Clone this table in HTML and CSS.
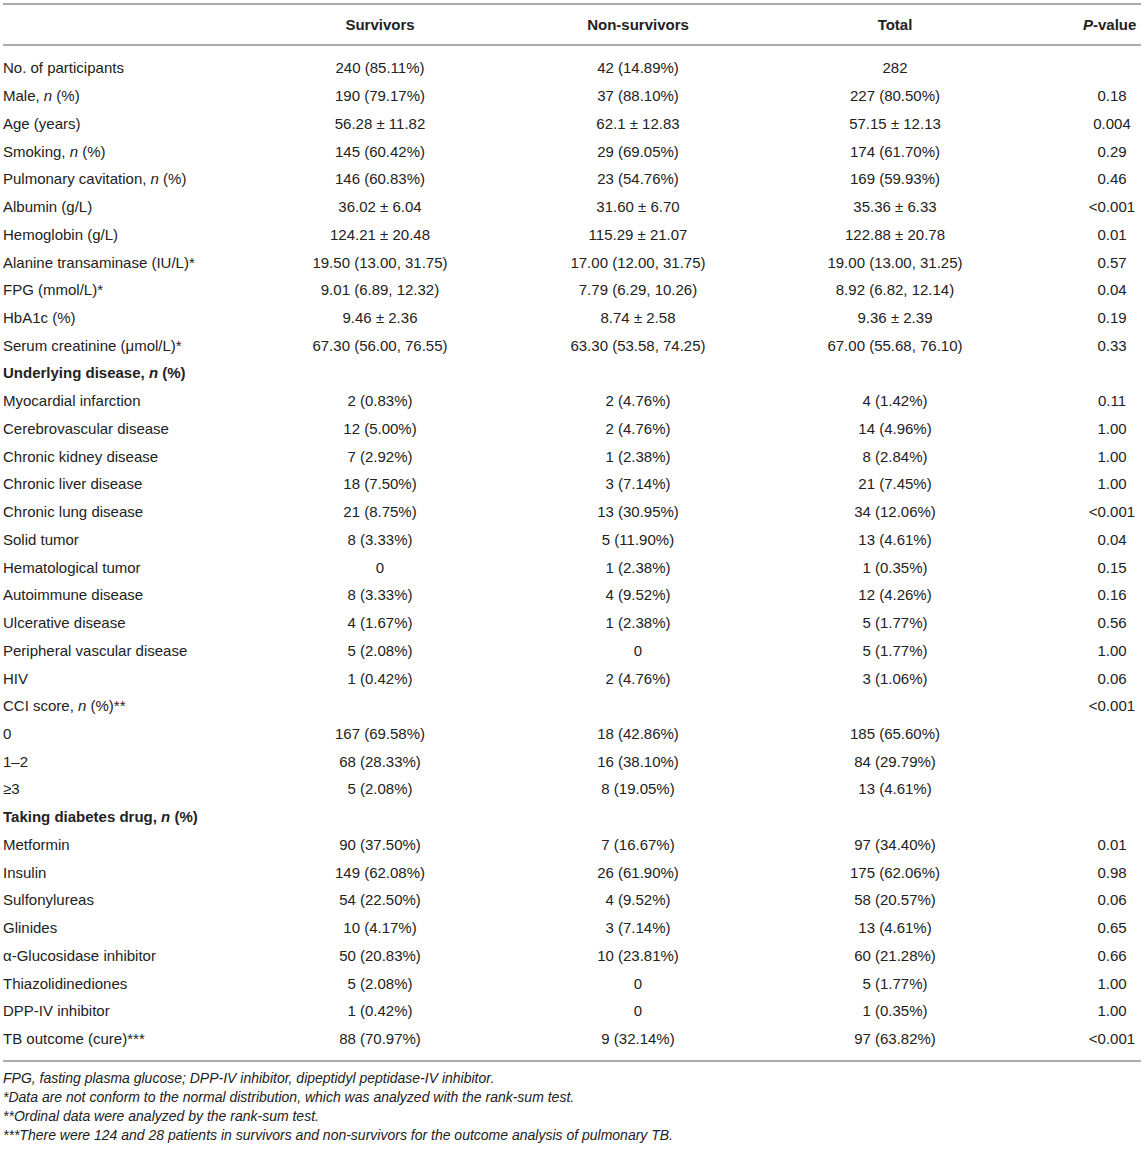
FILE: index.html
```html
<!DOCTYPE html>
<html lang="en">
<head>
  <meta charset="UTF-8" />
  <title>Baseline characteristics</title>
  <link rel="stylesheet" href="styles.css">
</head>
<body>

<div class="wrap">
  <table class="data">
    <colgroup>
      <col class="c-label">
      <col class="c-surv">
      <col class="c-non">
      <col class="c-total">
      <col class="c-p">
    </colgroup>
    <thead>
      <tr>
        <th></th>
        <th>Survivors</th>
        <th>Non-survivors</th>
        <th>Total</th>
        <th class="p-head"><i>P</i>-value</th>
      </tr>
    </thead>
    <tbody>
      <tr class="first"><td>No. of participants</td><td>240 (85.11%)</td><td>42 (14.89%)</td><td>282</td><td></td></tr>
      <tr><td>Male, <i>n</i> (%)</td><td>190 (79.17%)</td><td>37 (88.10%)</td><td>227 (80.50%)</td><td>0.18</td></tr>
      <tr><td>Age (years)</td><td>56.28 ± 11.82</td><td>62.1 ± 12.83</td><td>57.15 ± 12.13</td><td>0.004</td></tr>
      <tr><td>Smoking, <i>n</i> (%)</td><td>145 (60.42%)</td><td>29 (69.05%)</td><td>174 (61.70%)</td><td>0.29</td></tr>
      <tr><td>Pulmonary cavitation, <i>n</i> (%)</td><td>146 (60.83%)</td><td>23 (54.76%)</td><td>169 (59.93%)</td><td>0.46</td></tr>
      <tr><td>Albumin (g/L)</td><td>36.02 ± 6.04</td><td>31.60 ± 6.70</td><td>35.36 ± 6.33</td><td>&lt;0.001</td></tr>
      <tr><td>Hemoglobin (g/L)</td><td>124.21 ± 20.48</td><td>115.29 ± 21.07</td><td>122.88 ± 20.78</td><td>0.01</td></tr>
      <tr><td>Alanine transaminase (IU/L)*</td><td>19.50 (13.00, 31.75)</td><td>17.00 (12.00, 31.75)</td><td>19.00 (13.00, 31.25)</td><td>0.57</td></tr>
      <tr><td>FPG (mmol/L)*</td><td>9.01 (6.89, 12.32)</td><td>7.79 (6.29, 10.26)</td><td>8.92 (6.82, 12.14)</td><td>0.04</td></tr>
      <tr><td>HbA1c (%)</td><td>9.46 ± 2.36</td><td>8.74 ± 2.58</td><td>9.36 ± 2.39</td><td>0.19</td></tr>
      <tr><td>Serum creatinine (μmol/L)*</td><td>67.30 (56.00, 76.55)</td><td>63.30 (53.58, 74.25)</td><td>67.00 (55.68, 76.10)</td><td>0.33</td></tr>
      <tr class="section"><td colspan="5">Underlying disease, <i>n</i> (%)</td></tr>
      <tr><td>Myocardial infarction</td><td>2 (0.83%)</td><td>2 (4.76%)</td><td>4 (1.42%)</td><td>0.11</td></tr>
      <tr><td>Cerebrovascular disease</td><td>12 (5.00%)</td><td>2 (4.76%)</td><td>14 (4.96%)</td><td>1.00</td></tr>
      <tr><td>Chronic kidney disease</td><td>7 (2.92%)</td><td>1 (2.38%)</td><td>8 (2.84%)</td><td>1.00</td></tr>
      <tr><td>Chronic liver disease</td><td>18 (7.50%)</td><td>3 (7.14%)</td><td>21 (7.45%)</td><td>1.00</td></tr>
      <tr><td>Chronic lung disease</td><td>21 (8.75%)</td><td>13 (30.95%)</td><td>34 (12.06%)</td><td>&lt;0.001</td></tr>
      <tr><td>Solid tumor</td><td>8 (3.33%)</td><td>5 (11.90%)</td><td>13 (4.61%)</td><td>0.04</td></tr>
      <tr><td>Hematological tumor</td><td>0</td><td>1 (2.38%)</td><td>1 (0.35%)</td><td>0.15</td></tr>
      <tr><td>Autoimmune disease</td><td>8 (3.33%)</td><td>4 (9.52%)</td><td>12 (4.26%)</td><td>0.16</td></tr>
      <tr><td>Ulcerative disease</td><td>4 (1.67%)</td><td>1 (2.38%)</td><td>5 (1.77%)</td><td>0.56</td></tr>
      <tr><td>Peripheral vascular disease</td><td>5 (2.08%)</td><td>0</td><td>5 (1.77%)</td><td>1.00</td></tr>
      <tr><td>HIV</td><td>1 (0.42%)</td><td>2 (4.76%)</td><td>3 (1.06%)</td><td>0.06</td></tr>
      <tr><td>CCI score, <i>n</i> (%)**</td><td></td><td></td><td></td><td>&lt;0.001</td></tr>
      <tr><td>0</td><td>167 (69.58%)</td><td>18 (42.86%)</td><td>185 (65.60%)</td><td></td></tr>
      <tr><td>1–2</td><td>68 (28.33%)</td><td>16 (38.10%)</td><td>84 (29.79%)</td><td></td></tr>
      <tr><td>≥3</td><td>5 (2.08%)</td><td>8 (19.05%)</td><td>13 (4.61%)</td><td></td></tr>
      <tr class="section"><td colspan="5">Taking diabetes drug, <i>n</i> (%)</td></tr>
      <tr><td>Metformin</td><td>90 (37.50%)</td><td>7 (16.67%)</td><td>97 (34.40%)</td><td>0.01</td></tr>
      <tr><td>Insulin</td><td>149 (62.08%)</td><td>26 (61.90%)</td><td>175 (62.06%)</td><td>0.98</td></tr>
      <tr><td>Sulfonylureas</td><td>54 (22.50%)</td><td>4 (9.52%)</td><td>58 (20.57%)</td><td>0.06</td></tr>
      <tr><td>Glinides</td><td>10 (4.17%)</td><td>3 (7.14%)</td><td>13 (4.61%)</td><td>0.65</td></tr>
      <tr><td>α-Glucosidase inhibitor</td><td>50 (20.83%)</td><td>10 (23.81%)</td><td>60 (21.28%)</td><td>0.66</td></tr>
      <tr><td>Thiazolidinediones</td><td>5 (2.08%)</td><td>0</td><td>5 (1.77%)</td><td>1.00</td></tr>
      <tr><td>DPP-IV inhibitor</td><td>1 (0.42%)</td><td>0</td><td>1 (0.35%)</td><td>1.00</td></tr>
      <tr class="last"><td>TB outcome (cure)***</td><td>88 (70.97%)</td><td>9 (32.14%)</td><td>97 (63.82%)</td><td>&lt;0.001</td></tr>
    </tbody>
  </table>

  <div class="notes">
    <p>FPG, fasting plasma glucose; DPP-IV inhibitor, dipeptidyl peptidase-IV inhibitor.</p>
    <p>*Data are not conform to the normal distribution, which was analyzed with the rank-sum test.</p>
    <p>**Ordinal data were analyzed by the rank-sum test.</p>
    <p>***There were 124 and 28 patients in survivors and non-survivors for the outcome analysis of pulmonary TB.</p>
  </div>
</div>

</body>
</html>
```

FILE: styles.css
```css
body {
  margin: 0;
  background: #fff;
  color: #222;
  font-family: "Liberation Sans", Arial, sans-serif;
}

.wrap {
  padding: 3px 4px 0 3px;
}

.data {
  width: 1138px;
  table-layout: fixed;
  border-collapse: collapse;
  font-size: 15px;
  border-top: 2px solid #ababab;
  border-bottom: 2px solid #ababab;
}

.c-label { width: 188px; }
.c-surv  { width: 378px; }
.c-non   { width: 138px; }
.c-total { width: 376px; }
.c-p     { width: 58px; }

.data th {
  height: 39px;
  padding: 0;
  font-weight: bold;
  text-align: center;
  white-space: nowrap;
  border-bottom: 2px solid #ababab;
}

.data th.p-head {
  padding-right: 10px;
}

.data td {
  height: 27.74px;
  padding: 0;
  text-align: center;
  white-space: nowrap;
}

.data td:first-child {
  text-align: left;
}

.data tr.first td {
  padding-top: 8px;
}

.data tr.last td {
  padding-bottom: 8px;
}

.data tr.section td {
  font-weight: bold;
}

.notes {
  margin-top: 7px;
  font-size: 14px;
  font-style: italic;
}

.notes p {
  margin: 0;
  line-height: 19px;
}
```
